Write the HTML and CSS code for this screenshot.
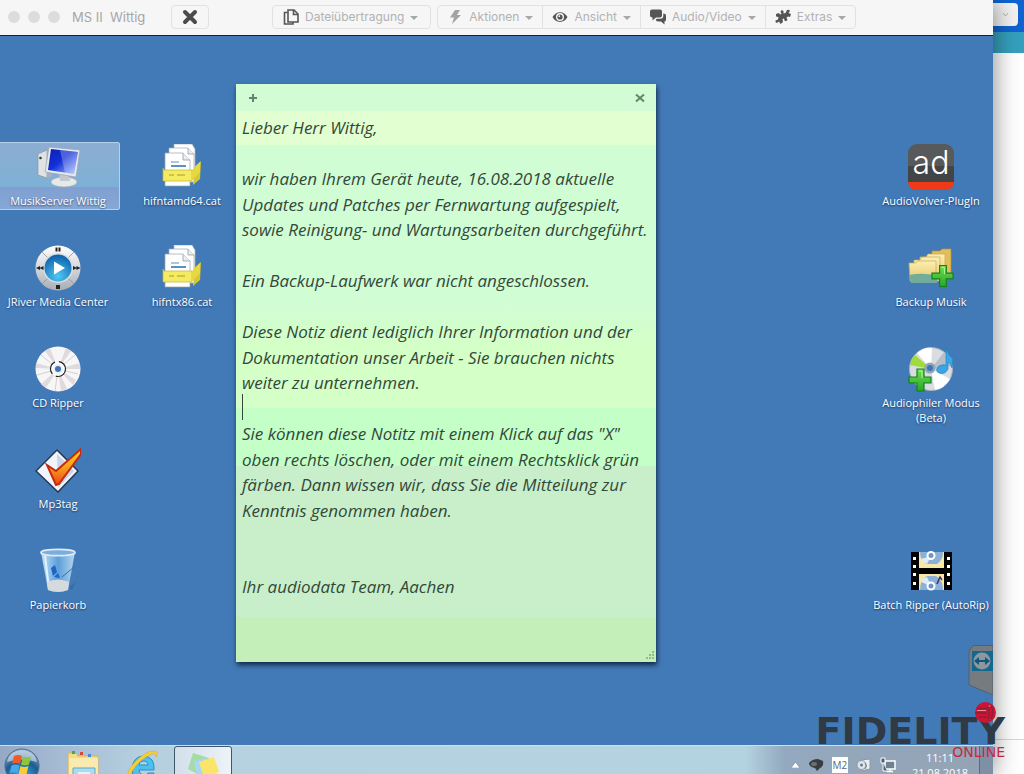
FILE: index.html
```html
<!DOCTYPE html>
<html lang="de">
<head>
    <meta charset="UTF-8">
    <meta name="viewport" content="width=device-width, initial-scale=1.0">
    <title>MS II Wittig</title>
    <link rel="stylesheet" href="styles.css">
</head>
<body>
    <svg class="defs" width="0" height="0" aria-hidden="true">
        <defs>
            <linearGradient id="screen" x1="0" y1="0" x2="1" y2="1">
                <stop offset="0" stop-color="#0a1fb4"/>
                <stop offset="0.45" stop-color="#1430d8"/>
                <stop offset="1" stop-color="#a9c6ff"/>
            </linearGradient>
            <linearGradient id="metal" x1="0" y1="0" x2="0" y2="1">
                <stop offset="0" stop-color="#ffffff"/>
                <stop offset="1" stop-color="#a9aeb5"/>
            </linearGradient>
            <radialGradient id="play" cx="0.5" cy="0.8" r="0.8">
                <stop offset="0" stop-color="#4fc8f4"/>
                <stop offset="1" stop-color="#0c5ea8"/>
            </radialGradient>
            <linearGradient id="flame" x1="0" y1="0" x2="0" y2="1">
                <stop offset="0" stop-color="#ffd21f"/>
                <stop offset="0.5" stop-color="#f9a11b"/>
                <stop offset="1" stop-color="#e8451a"/>
            </linearGradient>
            <linearGradient id="folder" x1="0" y1="0" x2="0" y2="1">
                <stop offset="0" stop-color="#fbf0b4"/>
                <stop offset="1" stop-color="#e6c668"/>
            </linearGradient>
            <linearGradient id="plus" x1="0" y1="0" x2="0" y2="1">
                <stop offset="0" stop-color="#6fe04e"/>
                <stop offset="1" stop-color="#27a52a"/>
            </linearGradient>
            <linearGradient id="glass" x1="0" y1="0" x2="1" y2="0">
                <stop offset="0" stop-color="#c5e2f6"/>
                <stop offset="0.5" stop-color="#5c9edb"/>
                <stop offset="1" stop-color="#b6d6ee"/>
            </linearGradient>
            <radialGradient id="orb" cx="0.5" cy="0.9" r="0.9">
                <stop offset="0" stop-color="#35c0ea"/>
                <stop offset="0.6" stop-color="#1c5c94"/>
                <stop offset="1" stop-color="#9db6cf"/>
            </radialGradient>
            <symbol id="cat-file" viewBox="2 0 46 46">
                <path d="M17 0h18l3 5v30l-21 3z" fill="#fff" stroke="#a9b1b8" stroke-width="0.7"/>
                <path d="M36 24l8-7-1 18-7 6z" fill="#d8c829"/>
                <path d="M12 4h19l6 6v28H12z" fill="#fff" stroke="#a2aab2" stroke-width="0.7"/>
                <path d="M8 9h18l7 7v26H8z" fill="#fff" stroke="#9aa3ab" stroke-width="0.7"/>
                <path d="M26 9v7h7M31 4v6h6" fill="#e8edf1" stroke="#89939c" stroke-width="0.7"/>
                <path d="M14 18h8" stroke="#5a90b8" stroke-width="1"/>
                <path d="M14 22h15" stroke="#1f70ae" stroke-width="1.5"/>
                <path d="M6 24l1 2h28v11H6z" fill="#f4eb62" stroke="#c6b52c" stroke-width="0.7"/>
                <path d="M35 26l8-8v10l-8 9z" fill="#e5d840"/>
                <path d="M12 31h5M20 31h8" stroke="#a89a28"/>
            </symbol>
            <symbol id="add" viewBox="0 0 24 24">
                <path d="M9 1h7v8h7v6h-7v8H9v-8H1V9h8z" fill="url(#plus)" stroke="#14801d" stroke-width="1.2"/>
                <path d="M11 3h3v7" fill="none" stroke="#b8f79e" stroke-width="1"/>
            </symbol>
        </defs>
    </svg>

    <div class="bildschirm">
        <main class="fenster">
            <header class="titelleiste">
                <span class="ampel"></span>
                <span class="ampel"></span>
                <span class="ampel"></span>
                <span class="titel">MS II&nbsp; Wittig</span>
                <button class="trennen" aria-label="Verbindung beenden">
                    <svg width="16" height="16" viewBox="0 0 16 16"><path d="M3 3l10 10M13 3L3 13" stroke="#4b4b4b" stroke-width="4" stroke-linecap="round"/></svg>
                </button>
                <div class="gruppe">
                    <button class="menue uebertragung">
                        <svg width="16" height="16" viewBox="0 0 16 16" fill="none" stroke="#555" stroke-width="1.6"><path d="M5 1h6l4 4v8H5z"/><path d="M10.500 1v4.500H15"/><path d="M4.500 3.500H1.500v11.500H10v-2"/></svg>
                        Dateiübertragung
                    </button>
                </div>
                <div class="gruppe">
                    <button class="menue">
                        <svg width="16" height="16" viewBox="0 0 16 16"><path d="M8 1h5l-3 5h4L5 15l2-6.500H3z" fill="#a3a3a3"/></svg>
                        Aktionen
                    </button>
                    <button class="menue">
                        <svg width="16" height="16" viewBox="0 0 16 16"><path d="M0.500 8C4 1.500 12 1.500 15.500 8 12 14.500 4 14.500 0.500 8z" fill="#555"/><circle cx="8" cy="8" r="4" fill="#f6f6f6"/><circle cx="8" cy="8" r="2.600" fill="#555"/><circle cx="7.300" cy="7.200" r="0.900" fill="#f6f6f6"/></svg>
                        Ansicht
                    </button>
                    <button class="menue">
                        <svg width="16" height="16" viewBox="0 0 16 16" fill="#555"><path d="M2 0.500h8q2 0 2 2v4q0 2-2 2H6L2.500 11.500V8.500Q0 8.500 0 6.500v-4q0-2 2-2z"/><path d="M13.300 4.500q2.700 0 2.700 2v4q0 2-1.500 2V15.500L11 12.500H8q-2 0-2.200-2L7 9.700h3.500q2.800-0.200 2.800-3z"/></svg>
                        Audio/Video
                    </button>
                    <button class="menue">
                        <svg width="16" height="16" viewBox="0 0 16 16" fill="#555"><path d="M1 5l3-1 1 1.500L6.500 5l-1-2.500Q6.500 0.500 8.500 2l0 2.500 2-0.500L12 1q2-1 3 1l-1.500 2 2.500 1-1 3-2-0.500-1.500 1 1 2.500q-1.500 2-3 0.500L9 9.500l-1.500 0.500L8 13l-2.500 2L4 12.500l-2 1.500q-2-0.500-1.500-2.500L3 10.500 3.500 8 1 7.500z"/></svg>
                        Extras
                    </button>
                </div>
            </header>

            <section class="desktop">
                <div class="symbole links">
                    <button class="symbol ausgewaehlt">
                        <svg width="46" height="46" viewBox="0 0 46 46">
                            <path d="M3 10l9-4v28l-9-3z" fill="#dfe3e6" stroke="#8f979f" stroke-width="0.700"/>
                            <path d="M12 6l5 1v26l-5 1z" fill="#a8b0b8"/>
                            <circle cx="5.500" cy="14" r="1.300" fill="#2b3d2b"/>
                            <ellipse cx="29" cy="38" rx="13" ry="5" fill="#e6e9ea" stroke="#a9aeb2" stroke-width="0.700"/>
                            <path d="M24 27h9l2 10H25z" fill="#c3c8cc"/>
                            <path d="M14 3l31 3-4 27-31-5z" fill="#e5e8ee" stroke="#9aa2ae" stroke-width="0.700"/>
                            <path d="M16 5l27 3-4 22-26-4z" fill="url(#screen)"/>
                            <path d="M25 6l18 2-4 22-9-1z" fill="#fff" opacity="0.250"/>
                        </svg>
                        <span>MusikServer Wittig</span>
                    </button>
                    <button class="symbol">
                        <svg width="46" height="46"><use href="#cat-file"/></svg>
                        <span>hifntamd64.cat</span>
                    </button>
                    <button class="symbol">
                        <svg width="46" height="46" viewBox="0 0 46 46">
                            <circle cx="23" cy="23" r="22.500" fill="url(#metal)"/>
                            <path d="M7 7l32 32M39 7L7 39" stroke="#8e949b" stroke-width="0.800"/>
                            <circle cx="23" cy="23" r="15" fill="#d7dde3"/>
                            <circle cx="23" cy="23" r="13.500" fill="url(#play)"/>
                            <path d="M19 16.500v13L30 23z" fill="#fff"/>
                            <path d="M20.500 2.500h2v4h-2zM23.500 2.500h2v4h-2zM21 40h4v4h-4zM5 21v4l-4-2zM8.500 21v4l-4-2zM38 21v4l4-2zM41.500 21v4l4-2z" fill="#222"/>
                        </svg>
                        <span>JRiver Media Center</span>
                    </button>
                    <button class="symbol">
                        <svg width="46" height="46"><use href="#cat-file"/></svg>
                        <span>hifntx86.cat</span>
                    </button>
                    <button class="symbol spalte-1">
                        <svg width="46" height="46" viewBox="0 0 46 46">
                            <circle cx="23" cy="23" r="22.500" fill="#f6f6f7"/>
                            <path d="M23 23L10 5l5-3zM23 23L31 2l5 3zM23 23L1 17v5zM23 23L45 17v6zM23 23L6 38l5 4zM23 23l3 22 6-2zM23 23l18 11-3 5z" fill="#e0dadd"/>
                            <path d="M23 23L6 9M23 23L40 9M23 23L2 29M23 23l20 5M23 23L20 45" stroke="#d5d0d3"/>
                            <circle cx="23" cy="23" r="7.500" fill="#fff" stroke="#222" stroke-width="1.200" stroke-dasharray="14 4"/>
                            <circle cx="23" cy="23" r="5" fill="#eef1f4"/>
                            <circle cx="23" cy="23" r="3" fill="#3f77b5"/>
                        </svg>
                        <span>CD Ripper</span>
                    </button>
                    <button class="symbol spalte-1">
                        <svg width="46" height="46" viewBox="0 0 46 46">
                            <path d="M22 3l21 21-20 21L1 24z" fill="#f1f5fb" stroke="#26384f" stroke-width="1.500"/>
                            <path d="M22 7l17 17-16 17z" fill="#c9d6e8"/>
                            <path d="M12 18l9 6L46 2v5L24 37l-3 1z" fill="url(#flame)" stroke="#c42a10" stroke-width="2"/>
                        </svg>
                        <span>Mp3tag</span>
                    </button>
                    <button class="symbol spalte-1">
                        <svg width="46" height="46" viewBox="0 0 46 46">
                            <path d="M33 40l8-6-4 8z" fill="#2b5f95" opacity="0.500"/>
                            <path d="M6 4h34l-7 38q-10 4-20 0z" fill="url(#glass)"/>
                            <path d="M16 20l4-3 2 7-4 4zM19 29l4-4 2 5z" fill="#1d66c4"/>
                            <path d="M10 8l4 32" stroke="#e3f3ff" stroke-width="2"/>
                            <path d="M39 19L27 29" stroke="#376c9c"/>
                            <path d="M12 34q11-5 22 0l-1 8q-10 4-20 0z" fill="#d5dadd"/>
                            <ellipse cx="23" cy="4.500" rx="17" ry="3.200" fill="#7aaee0" stroke="#e2eaf0" stroke-width="1.800"/>
                        </svg>
                        <span>Papierkorb</span>
                    </button>
                </div>

                <div class="symbole rechts">
                    <button class="symbol">
                        <svg width="46" height="46" viewBox="0 0 46 46">
                            <rect x="0" y="0" width="46" height="46" rx="9" fill="#58595b"/>
                            <path d="M0 22h46v16H0z" fill="#434446"/>
                            <path d="M0 38h46q-1 8-9 8H9q-8 0-9-8z" fill="#ee3a17"/>
                            <text x="23" y="30" class="ad" text-anchor="middle">ad</text>
                        </svg>
                        <span>AudioVolver-PlugIn</span>
                    </button>
                    <button class="symbol">
                        <svg width="46" height="46" viewBox="0 0 46 46">
                            <path d="M24 6h8l2-2h9v30H24z" fill="#e2bd58" stroke="#b8923a" stroke-width="0.700"/>
                            <path d="M12 12h6l2-3h17v25H12z" fill="url(#folder)" stroke="#caa852" stroke-width="0.700"/>
                            <path d="M6 15h6l2-3h18v24H6z" fill="url(#folder)" stroke="#caa852" stroke-width="0.700"/>
                            <path d="M1 18h7l2-2h18v20H2z" fill="url(#folder)" stroke="#caa852" stroke-width="0.700"/>
                            <path d="M1 30q15-3 28 1v7H3z" fill="#72ad9c"/>
                            <use href="#add" x="23" y="19" width="23" height="24"/>
                        </svg>
                        <span>Backup Musik</span>
                    </button>
                    <button class="symbol">
                        <svg width="46" height="46" viewBox="0 0 46 46">
                            <circle cx="23" cy="23" r="21.500" fill="#d9dde1" stroke="#aab1b8"/>
                            <path d="M23 23L9 7q7-6 15-5z" fill="#fff"/>
                            <path d="M23 23L2 19q1-6 5-10z" fill="#9fdb3c"/>
                            <path d="M23 23l19 10q-6 10-15 11z" fill="#fff"/>
                            <path d="M23 23L36 6q7 6 8 14z" fill="#b7bec7"/>
                            <circle cx="22" cy="22" r="5.500" fill="#8fa5bc"/>
                            <circle cx="22" cy="22" r="3" fill="#3f77b5"/>
                            <path d="M38 1q1 7 7 12l-1 9q-2-6-4-6v7q-3 6-9 4-5-3 0-7 4-2 7-1z" fill="#38a5e4" stroke="#1d7dc0" stroke-width="0.600"/>
                            <use href="#add" x="0" y="22" width="24" height="24"/>
                        </svg>
                        <span>Audiophiler Modus<br>(Beta)</span>
                    </button>
                    <button class="symbol zeile-5">
                        <svg width="46" height="46" viewBox="0 0 46 46">
                            <path d="M3 4h41v38H3z" fill="#000"/>
                            <path d="M11 4h25v16H11zM11 26h25v16H11z" fill="#f6e8a5"/>
                            <path d="M12 4h23q0 8-6 12H18q-6-4-6-12z" fill="#8cb0d8"/>
                            <path d="M12 42q0-10 7-14h9q7 4 7 14z" fill="#8cb0d8"/>
                            <path d="M23 8L13 11q2 4 6 5zM23 38L13 34q2-4 6-5z" fill="#dfeafa"/>
                            <circle cx="23" cy="7.500" r="3.500" fill="#7095c4" stroke="#fff" stroke-width="2"/>
                            <circle cx="23" cy="38" r="3.500" fill="#7095c4" stroke="#fff" stroke-width="2"/>
                            <path d="M29 36l3-7 2 3" fill="none" stroke="#3e2f73" stroke-width="1.500"/>
                            <path d="M5 9h3v3H5zM5 17h3v3H5zM5 25h3v3H5zM5 34h3v3H5zM39 9h3v3h-3zM39 17h3v3h-3zM39 25h3v3h-3zM39 34h3v3h-3z" fill="#fff"/>
                        </svg>
                        <span>Batch Ripper (AutoRip)</span>
                    </button>
                </div>

                <article class="notiz">
                    <div class="notiz-kopf">
                        <button aria-label="Neue Notiz"><svg width="10" height="10" viewBox="0 0 10 10"><path d="M5 1v8M1 5h8" stroke="#64836a" stroke-width="2"/></svg></button>
                        <button aria-label="Notiz löschen"><svg width="10" height="10" viewBox="0 0 10 10"><path d="M1 1.500l8 7M9 1.500l-8 7" stroke="#64836a" stroke-width="2"/></svg></button>
                    </div>
                    <textarea class="notiz-text" aria-label="Notiz" spellcheck="false">Lieber Herr Wittig,

wir haben Ihrem Gerät heute, 16.08.2018 aktuelle
Updates und Patches per Fernwartung aufgespielt,
sowie Reinigung- und Wartungsarbeiten durchgeführt.

Ein Backup-Laufwerk war nicht angeschlossen.

Diese Notiz dient lediglich Ihrer Information und der
Dokumentation unser Arbeit - Sie brauchen nichts
weiter zu unternehmen.

Sie können diese Notitz mit einem Klick auf das "X"
oben rechts löschen, oder mit einem Rechtsklick grün
färben. Dann wissen wir, dass Sie die Mitteilung zur
Kenntnis genommen haben.


Ihr audiodata Team, Aachen</textarea>
                    <span class="cursor"></span>
                    <svg class="griff" width="9" height="9" viewBox="0 0 9 9"><path d="M7 0h2v2H7zM7 3h2v2H7zM7 6h2v2H7zM4 3h2v2H4zM4 6h2v2H4zM1 6h2v2H1z" fill="#94b992"/></svg>
                </article>

                <button class="teamviewer" aria-label="TeamViewer">
                    <svg width="25" height="50" viewBox="0 0 25 50">
                        <path d="M5 0.500h20V50L1 40V6z" fill="#767b80" stroke="#52606e"/>
                        <path d="M4 6h21v20H4z" fill="#12688f"/>
                        <circle cx="14" cy="16" r="8.500" fill="#8e979d"/>
                        <path d="M6 16l5-4v3h6v-3l5 4-5 4v-3h-6v3z" fill="#12587c"/>
                    </svg>
                </button>
            </section>

            <footer class="taskleiste">
                <button class="start" aria-label="Start">
                    <svg width="36" height="36" viewBox="0 0 36 36">
                        <circle cx="18" cy="18" r="17" fill="url(#orb)" stroke="#4c6a88"/>
                        <path d="M3 14q2-11 15-12 13 1 15 12-15-5-30 0z" fill="#dce6ef" opacity="0.600"/>
                        <path d="M10 8q4-2 8 0l-2 8q-4-2-8 0z" fill="#ef5a28"/>
                        <path d="M19 8.500q4 2 8 0l-2 8q-4 2-8 0z" fill="#8cc63f"/>
                        <path d="M7.500 17.500q4-2 8 0l-2 8q-4-2-8 0z" fill="#45a8e8"/>
                        <path d="M16.500 18q4 2 8 0l-2 8q-4 2-8 0z" fill="#fccb30"/>
                    </svg>
                </button>
                <button class="task" aria-label="Explorer">
                    <svg width="34" height="32" viewBox="0 0 34 32">
                        <path d="M2 3h8l2 3h20v26H2z" fill="#f6dc8a" stroke="#d5b55c"/>
                        <path d="M3 8h29v24H3z" fill="#fbeab0"/>
                        <path d="M6 1h3v3H6z" fill="#4aa84a"/><path d="M14 2h3v3h-3z" fill="#d04a3a"/><path d="M22 4h3v3h-3z" fill="#4a8ad0"/>
                        <path d="M7 18h22v14H7z" fill="#a9dcef" stroke="#5ea9c9"/>
                        <path d="M12 22h12v10H12z" fill="#e2f4fa"/>
                    </svg>
                </button>
                <button class="task" aria-label="Internet Explorer">
                    <svg width="34" height="32" viewBox="0 0 34 32">
                        <path d="M27 20H13q1 5 5 5 3 0 4-2h6q-3 9-11 9Q6 31 6 19 7 6 18 6q11 1 10 14zM13 15h9q0-4-5-4-4 0-4 4z" fill="#4cc1ee" stroke="#2391c9" fill-rule="evenodd"/>
                        <path d="M3 28Q-1 23 8 13 20 0 29 1q4 1 1 6 0-4-4-3Q14 9 7 20q-4 6-4 8z" fill="#f5ce3a" stroke="#d7a720" stroke-width="0.500"/>
                    </svg>
                </button>
                <button class="task aktiv" aria-label="Kurznotizen">
                    <svg width="34" height="30" viewBox="0 0 34 30">
                        <path d="M7 0l16 5-6 19-15-8z" fill="#a4dba6"/>
                        <path d="M8 8l12-3 5 17-14 4z" fill="#a9d7ef"/>
                        <path d="M13 9l15-5 5 15-15 6z" fill="#fbe46a"/>
                    </svg>
                </button>
                <div class="infobereich">
                    <svg width="9" height="6" viewBox="0 0 9 6"><path d="M4.500 0L9 6H0z" fill="#fff" stroke="#687887" stroke-width="0.500"/></svg>
                    <svg width="16" height="16" viewBox="0 0 16 16"><path d="M1 6q3-4 9-4l5 2q1 5-3 7l-3 3-2-3Q1 10 1 6z" fill="#3a3d40"/><ellipse cx="6" cy="7" rx="3" ry="2" fill="#6a6f74"/></svg>
                    <span class="m2">M2</span>
                    <svg width="16" height="16" viewBox="0 0 16 16"><path d="M5 3l9-1v10l-9 2z" fill="#e9edf0" stroke="#8b99a6"/><circle cx="5.500" cy="8" r="4.500" fill="#dfe5ea" stroke="#8b99a6"/><circle cx="5.500" cy="8" r="1.500" fill="#6d7d8c"/><path d="M9 6q3 3 0 6" fill="none" stroke="#6d7d8c"/></svg>
                    <svg width="16" height="16" viewBox="0 0 16 16"><path d="M5 4h10v8H5z" fill="#6f8193" stroke="#fff" stroke-width="1.500"/><path d="M7 14.500h6M10 12v2" stroke="#fff" stroke-width="1.500"/><path d="M1 1h4v5H1zM3 6v8h4" fill="#4f6070" stroke="#fff"/></svg>
                    <div class="uhr">
                        <time datetime="11:11">11:11</time>
                        <time datetime="2018-08-21">21.08.2018</time>
                    </div>
                    <span class="peek"></span>
                </div>
            </footer>
        </main>

        <aside class="hintergrund">
            <div class="tableiste">
                <button aria-label="Tabs anzeigen"><svg width="7" height="5" viewBox="0 0 7 5"><path d="M1 1l2.500 3L6 1" fill="none" stroke="#b5b5b5"/></svg></button>
            </div>
            <div class="banner"></div>
            <div class="seite"></div>
        </aside>
    </div>

    <div class="logo">
        <svg class="logo-ball" width="21" height="21" viewBox="0 0 21 21"><circle cx="10.500" cy="10.500" r="10.500" fill="#cf1432"/><path d="M2 6.500h10M0 11h12M4 15h7M13 4q2 6 0 13M16 3q3 7 0 14" fill="none" stroke="#8f1c38" stroke-width="1.500"/><path d="M2 8.500h9M13.500 4h2" stroke="#ef8b96"/></svg>
        <span class="logo-name">FIDELITY</span>
        <span class="logo-zusatz">ONLINE</span>
    </div>
</body>
</html>
```
FILE: styles.css
```css
* {
    box-sizing: border-box;
}

body {
    margin: 0;
    font-family: "Segoe UI", "Open Sans", "Noto Sans", sans-serif;
    font-size: 11px;
    overflow: hidden;
}

button {
    border: none;
    background: none;
    padding: 0;
    font: inherit;
    color: inherit;
}

svg {
    display: block;
    flex: none;
}

.defs {
    position: absolute;
}

.bildschirm {
    display: flex;
    height: 100vh;
}

.fenster {
    position: relative;
    flex: 1;
    min-width: 0;
    display: flex;
    flex-direction: column;
    z-index: 1;
    box-shadow: 0 0 24px rgba(0, 0, 0, 0.5);
}

/* Titelleiste */
.titelleiste {
    display: flex;
    align-items: center;
    height: 36px;
    padding: 0 0 2px 8px;
    background-color: #f6f6f6;
    border-bottom: 1px solid #0d2338;
    font-family: Inter, Roboto, sans-serif;
    font-size: 12px;
    color: #b2b2b2;
}

.ampel {
    width: 12px;
    height: 12px;
    margin-right: 8px;
    border-radius: 50%;
    background-color: #dcdcdc;
}

.titel {
    width: 103px;
    padding-left: 4px;
    font-size: 13px;
    white-space: nowrap;
    color: #a6a6a6;
}

.trennen,
.gruppe {
    display: flex;
    height: 24px;
    border: 1px solid #e2e2e2;
    border-radius: 4px;
}

.trennen {
    width: 38px;
    margin-right: 63px;
    align-items: center;
    justify-content: center;
}

.gruppe {
    margin-right: 6px;
}

.menue {
    display: flex;
    align-items: center;
    gap: 6px;
    padding: 0 9px;
    white-space: nowrap;
}

.uebertragung {
    padding: 0 12px 0 10px;
}

.menue + .menue {
    border-left: 1px solid #e2e2e2;
}

.menue::after {
    content: "";
    margin-top: 2px;
    border: 4px solid transparent;
    border-top-color: #a8a8a8;
    border-bottom: none;
}

/* Desktop */
.desktop {
    position: relative;
    flex: 1;
    min-height: 0;
    display: flex;
    justify-content: space-between;
    padding-top: 106px;
    overflow: hidden;
    background-color: #427ab8;
}

.symbole {
    display: grid;
    grid-auto-rows: 101px;
    align-items: start;
}

.links {
    grid-template-columns: 124px 124px;
    margin-left: -4px;
}

.rechts {
    grid-template-columns: 124px;
}

.symbol {
    display: flex;
    flex-direction: column;
    align-items: center;
    gap: 3px;
    padding: 1px 0 0;
    min-height: 68px;
    border: 1px solid transparent;
    border-radius: 2px;
    line-height: 15px;
    white-space: nowrap;
    color: #fff;
    text-shadow: 0 1px 2px rgba(0, 20, 60, 0.7);
}

.ausgewaehlt {
    border-color: #b5d1ea;
    background: linear-gradient(#8dadd2 0, #7db0d6 44px, #809fd0 44px, #86a8d6);
}

.spalte-1 {
    grid-column: 1;
}

.zeile-5 {
    grid-row: 5;
}

.ad {
    font-family: Inter, "Liberation Sans", sans-serif;
    font-size: 32px;
    font-weight: 300;
    fill: #fff;
    text-shadow: none;
}

/* Kurznotiz */
.notiz {
    position: absolute;
    left: 236px;
    top: 48px;
    width: 420px;
    height: 578px;
    display: flex;
    flex-direction: column;
    box-shadow: 1px 3px 5px rgba(0, 20, 40, 0.8);
    background: linear-gradient(
        #d2fdd4 0 27px,
        #e1ffd1 27px 61px,
        #d0fdd4 61px 220px,
        #d4ffc7 260px 324px,
        #c4ffc7 324px 382px,
        #c8efca 382px 533px,
        #c5efb9 533px);
}

.notiz-kopf {
    display: flex;
    justify-content: space-between;
    align-items: center;
    height: 27px;
    padding: 0 11px 0 12px;
}

.notiz-text {
    flex: 1;
    padding: 4px 0 0 6px;
    border: none;
    outline: none;
    resize: none;
    overflow: hidden;
    background: none;
    font-family: "Segoe Print", "Open Sans", "Noto Sans", sans-serif;
    font-size: 17px;
    font-style: italic;
    line-height: 1.5;
    white-space: pre;
    color: #33483a;
}

.cursor {
    position: absolute;
    left: 6px;
    top: 310px;
    width: 1px;
    height: 26px;
    background-color: #33483a;
}

.griff {
    position: absolute;
    right: 2px;
    bottom: 2px;
}

.teamviewer {
    position: absolute;
    right: 0;
    bottom: 50px;
}

/* Taskleiste */
.taskleiste {
    display: flex;
    align-items: flex-start;
    height: 29px;
    overflow: hidden;
    border-top: 1px solid #cfe0ec;
    background: linear-gradient(90deg, #95a9c5 0, #a5bad3 60px, #b5cfdf 140px, #b6d2e0 240px, #b4d3e0 75%, #93a9bf 79%, #93a3b3);
}

.start {
    padding: 2px 0 0 4px;
    width: 54px;
}

.task {
    display: flex;
    justify-content: center;
    width: 58px;
    height: 40px;
    margin-right: 2px;
    padding-top: 4px;
}

.aktiv {
    padding-top: 6px;
    border: 1px solid #42566c;
    border-radius: 3px;
    background: linear-gradient(90deg, #d2dfeb, #edf3f8);
}

.infobereich {
    display: flex;
    align-items: center;
    gap: 8px;
    height: 38px;
    margin-left: auto;
    color: #fff;
}

.m2 {
    width: 16px;
    background-color: #fff;
    color: #5d6872;
    font-size: 10px;
    line-height: 16px;
    text-align: center;
}

.uhr {
    display: flex;
    flex-direction: column;
    align-items: center;
    padding: 0 3px 0 8px;
    line-height: 15px;
}

.peek {
    width: 14px;
    height: 38px;
    border-left: 1px solid #5b6c7e;
    background-color: #7d90a5;
}

/* Browser dahinter */
.hintergrund {
    display: flex;
    flex-direction: column;
    width: 31px;
    background-color: #fff;
}

.tableiste {
    height: 32px;
    padding-top: 3px;
    background-color: #0f63d2;
}

.tableiste button {
    display: flex;
    align-items: center;
    justify-content: center;
    width: 25px;
    height: 23px;
    border-radius: 0 4px 4px 0;
    background-color: #f2f2f2;
}

.banner {
    height: 21px;
    background-color: #35a0bd;
}

.seite {
    flex: 1;
    margin-bottom: 34px;
    border-bottom: 1px solid #d8d8d8;
}

/* Logo */
.logo {
    position: absolute;
    right: 19px;
    bottom: 16px;
    z-index: 2;
    display: flex;
    flex-direction: column;
    align-items: flex-end;
    font-family: "DejaVu Sans", sans-serif;
}

.logo-ball {
    position: absolute;
    right: 9px;
    top: -14px;
}

.logo-name {
    font-size: 38px;
    font-weight: bold;
    line-height: 30px;
    color: #2f3a45;
}

.logo-zusatz {
    font-size: 14px;
    line-height: 12px;
    color: #c22845;
}
```
